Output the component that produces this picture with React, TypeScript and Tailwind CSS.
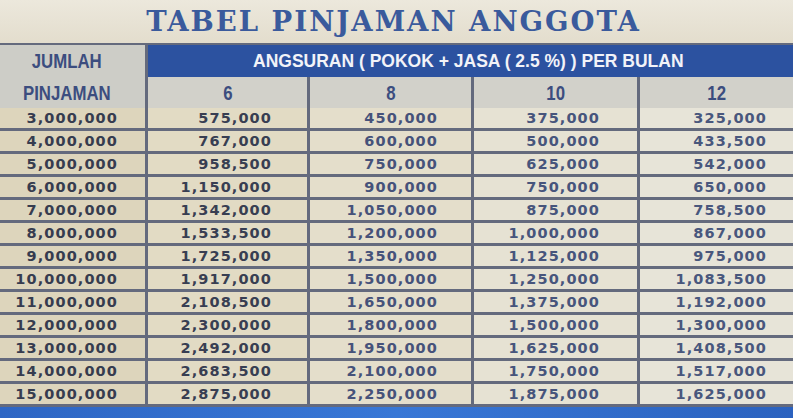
const rows: string[][] = [
  ["3,000,000", "575,000", "450,000", "375,000", "325,000"],
  ["4,000,000", "767,000", "600,000", "500,000", "433,500"],
  ["5,000,000", "958,500", "750,000", "625,000", "542,000"],
  ["6,000,000", "1,150,000", "900,000", "750,000", "650,000"],
  ["7,000,000", "1,342,000", "1,050,000", "875,000", "758,500"],
  ["8,000,000", "1,533,500", "1,200,000", "1,000,000", "867,000"],
  ["9,000,000", "1,725,000", "1,350,000", "1,125,000", "975,000"],
  ["10,000,000", "1,917,000", "1,500,000", "1,250,000", "1,083,500"],
  ["11,000,000", "2,108,500", "1,650,000", "1,375,000", "1,192,000"],
  ["12,000,000", "2,300,000", "1,800,000", "1,500,000", "1,300,000"],
  ["13,000,000", "2,492,000", "1,950,000", "1,625,000", "1,408,500"],
  ["14,000,000", "2,683,500", "2,100,000", "1,750,000", "1,517,000"],
  ["15,000,000", "2,875,000", "2,250,000", "1,875,000", "1,625,000"],
]

const cols = "grid grid-cols-[145px_159px_161px_163px_1fr] gap-[3px]"
const pads = ["pr-[27px]", "pr-[35px]", "pr-[33px]", "pr-[37px]", "pr-[26px]"]
const tints = [
  "bg-[#ddd5bc] text-[#363c4f]",
  "bg-[#e2dbc4] text-[#383e52]",
  "bg-[#e4decb] text-[#46527a]",
  "bg-[#e6e2d3] text-[#47557c]",
  "bg-[#e7e4d8] text-[#49577d]",
]

// narrow header lettering, squeezed from Liberation Sans
const narrow = "inline-block scale-x-[0.8] font-['Liberation_Sans',sans-serif] text-[#3c4d7f]"

export default function App() {
  return (
    <div className="w-[793px] h-[418px] overflow-hidden bg-[#e7e2d4] flex flex-col">
      <div className="h-[43px] flex items-center justify-center pr-[6px] bg-gradient-to-b from-[#ece8dc] to-[#e3ddcd]">
        <h1 className="font-['DejaVu_Serif',serif] font-bold text-[27.5px] tracking-[2px] text-[#3a5a9c] leading-none">
          TABEL PINJAMAN ANGGOTA
        </h1>
      </div>

      <div className="flex-1 bg-[#646a7d] pt-[2px] flex flex-col gap-[3px] font-['DejaVu_Sans',sans-serif] font-bold">
        <div className={cols + " h-[29px]"}>
          <div className="bg-[#cdcdc7] flex items-center justify-center pr-[12px]">
            <span className={narrow + " text-[21px]"}>JUMLAH</span>
          </div>
          <div className="col-span-4 bg-[#2c52a0] flex items-center pl-[105px] font-['Liberation_Sans',sans-serif] text-[17.5px] text-[#f2f3f8]">
            ANGSURAN ( POKOK + JASA ( 2.5 %) ) PER BULAN
          </div>
        </div>

        <div className={cols + " h-[28px]"}>
          {["PINJAMAN", "6", "8", "10", "12"].map((h, i) => (
            <div
              key={h}
              className={
                "flex items-center justify-center " +
                (i === 0 ? "bg-[#cdcdc7] pr-[12px]" : "bg-[#d2d1ca]")
              }
            >
              <span className={narrow + " text-[21px]"}>{h}</span>
            </div>
          ))}
        </div>

        {rows.map((r) => (
          <div key={r[0]} className={cols + " h-[20px]"}>
            {r.map((v, i) => (
              <div
                key={i}
                className={
                  "flex items-center justify-end text-[14.5px] tracking-[1.1px] leading-none " +
                  pads[i] +
                  " " +
                  tints[i]
                }
              >
                {v}
              </div>
            ))}
          </div>
        ))}

        <div className="flex-1 bg-gradient-to-r from-[#2e66c4] via-[#3877d6] to-[#2b62bf]" />
      </div>
    </div>
  )
}
